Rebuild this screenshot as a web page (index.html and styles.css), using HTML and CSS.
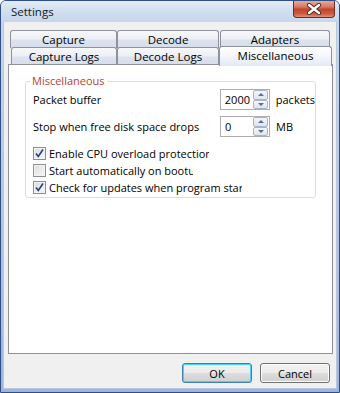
FILE: index.html
```html
<!DOCTYPE html>
<html>
<head>
<meta charset="utf-8">
<link rel="stylesheet" href="styles.css">
</head>
<body>
<div class="window">
  <div class="titlebar">
    <span class="title">Settings</span>
    <div class="close">
      <svg width="16" height="12" viewBox="0 0 16 12">
        <path d="M3 2 L13 10 M13 2 L3 10" stroke="#4a2a24" stroke-width="4.2" stroke-linecap="round"/>
        <path d="M3 2 L13 10 M13 2 L3 10" stroke="#ffffff" stroke-width="2.4" stroke-linecap="round"/>
      </svg>
    </div>
  </div>
  <div class="client">
    <div class="tabs">
      <div class="tabrow back">
        <div class="tab t1">Capture</div>
        <div class="tab t2">Decode</div>
        <div class="tab t3">Adapters</div>
      </div>
      <div class="tabrow front">
        <div class="tab t4">Capture Logs</div>
        <div class="tab t5">Decode Logs</div>
        <div class="tab sel">Miscellaneous</div>
      </div>
    </div>
    <div class="pane">
      <fieldset class="group">
        <legend>Miscellaneous</legend>
        <div class="row">
          <span class="label">Packet buffer</span>
          <div class="spin"><span class="val">2000</span><div class="arrows"><span class="up"></span><span class="down"></span></div></div>
          <span class="unit">packets</span>
        </div>
        <div class="row row2">
          <span class="label">Stop when free disk space drops</span>
          <div class="spin"><span class="val">0</span><div class="arrows"><span class="up"></span><span class="down"></span></div></div>
          <span class="unit">MB</span>
        </div>
        <div class="check first">
          <span class="box checked"><svg width="11" height="11" viewBox="0 0 11 11"><path d="M2 5.5 L4.3 8.5 L9 1.5" fill="none" stroke="#263f86" stroke-width="1.6"/></svg></span>
          <span class="ctext c1">Enable CPU overload protection</span>
        </div>
        <div class="check">
          <span class="box"></span>
          <span class="ctext c2">Start automatically on bootup</span>
        </div>
        <div class="check">
          <span class="box checked"><svg width="11" height="11" viewBox="0 0 11 11"><path d="M2 5.5 L4.3 8.5 L9 1.5" fill="none" stroke="#263f86" stroke-width="1.6"/></svg></span>
          <span class="ctext c3">Check for updates when program starts</span>
        </div>
      </fieldset>
    </div>
    <div class="buttons">
      <div class="btn default">OK</div>
      <div class="btn">Cancel</div>
    </div>
  </div>
</div>
</body>
</html>
```
FILE: styles.css
```css
* { box-sizing: border-box; }
html, body { margin: 0; padding: 0; }
body {
  width: 340px;
  height: 393px;
  overflow: hidden;
  font-family: "Open Sans", "Noto Sans", sans-serif;
  font-size: 11px;
  color: #000;
  background: #ffffff;
}
.window {
  width: 340px;
  height: 393px;
  border: 1px solid #2f4f86;
  border-radius: 6px 6px 0 0;
  background: linear-gradient(to bottom, #d9e4f3 0, #c8d7ed 22px, #9db5dd 100%);
  display: flex;
  flex-direction: column;
  overflow: hidden;
}
.titlebar {
  height: 21px;
  position: relative;
  display: flex;
  align-items: center;
  padding-left: 10px;
  background: linear-gradient(to bottom, #e3ebf6 0, #d1deef 50%, #c6d6ec 100%);
}
.title {
  font-size: 11.5px;
  color: #101a2a;
}
.close {
  position: absolute;
  right: 4px;
  top: -1px;
  width: 42px;
  height: 18px;
  border: 1px solid #6b2b22;
  border-top: none;
  border-radius: 0 0 4px 4px;
  background: linear-gradient(to bottom, #eab2a3 0, #d77a64 40%, #c2442c 55%, #cc5a3f 80%, #e09077 100%);
  display: flex;
  align-items: center;
  justify-content: center;
}
.client {
  flex: 1;
  margin: 0 2px 3px 2px;
  background: #f0f0f0;
  border: 1px solid #b9c8de;
  border-top: none;
  padding: 8px 3px 0 4px;
  display: flex;
  flex-direction: column;
}
.tabs { display: flex; flex-direction: column; }
.tabrow { display: flex; height: 17px; align-items: flex-start; }
.back { margin-left: 2px; }
.front { margin-left: 3px; }
.tab {
  height: 18px;
  border: 1px solid #8e929c;
  border-bottom: none;
  border-radius: 3px 3px 0 0;
  background: linear-gradient(to bottom, #f7f8fa 0, #eceff5 45%, #dde3ee 55%, #d6dce9 100%);
  display: flex;
  align-items: center;
  justify-content: center;
  line-height: 14px;
  padding-top: 1px;
  white-space: nowrap;
  font-size: 11.5px;
}
.t1 { width: 107px; }
.t2 { width: 102px; margin-left: 0; }
.t3 { width: 110px; margin-left: 1px; }
.t4 { width: 106px; }
.t5 { width: 102px; }
.sel {
  width: 113px;
  height: 20px;
  margin-top: -1px;
  position: relative;
  z-index: 2;
  padding-bottom: 3px;
  background: linear-gradient(to bottom, #ffffff 0, #f6f8fc 40%, #e3e9f6 100%);
}
.pane {
  height: 290px;
  border: 1px solid #8e929c;
  background: #ffffff;
  padding: 8px 16px 0 16px;
  position: relative;
  z-index: 1;
}
.group {
  margin: 0;
  padding: 0 0 1px 7px;
  border: 1px solid #d5dfe5;
  border-radius: 3px;
  min-width: 0;
}
.group legend {
  padding: 0 2px;
  margin-left: -3px;
  color: #b5452b;
  line-height: 16px;
}
.row {
  display: flex;
  align-items: center;
  height: 21px;
}
.row2 { margin-top: 6px; }
.label { width: 187px; white-space: nowrap; }
.spin {
  width: 50px;
  height: 21px;
  border: 1px solid #abadb3;
  background: #fff;
  display: flex;
  align-items: center;
  padding-left: 4px;
  padding-right: 1px;
}
.val { flex: 1; }
.arrows {
  width: 15px;
  height: 19px;
  display: flex;
  flex-direction: column;
}
.arrows span {
  flex: 1;
  border: 1px solid #a9b4c5;
  border-radius: 2px;
  background: linear-gradient(to bottom, #f5f6f8, #e0e3ea);
  position: relative;
}
.arrows span::after {
  content: "";
  position: absolute;
  left: 4px;
  top: 2px;
  border-left: 3px solid transparent;
  border-right: 3px solid transparent;
}
.arrows .up::after { border-bottom: 3px solid #4f6fa8; }
.arrows .down::after { border-top: 3px solid #4f6fa8; }
.unit { margin-left: 6px; }
.check {
  display: flex;
  align-items: center;
  height: 17px;
}
.check.first { margin-top: 8px; }
.box {
  width: 13px;
  height: 13px;
  border: 1px solid #8f8f8f;
  background: linear-gradient(135deg, #dcdcdc, #f8f8f8);
  box-shadow: inset 0 0 0 1px #f4f4f4;
  display: flex;
  align-items: center;
  justify-content: center;
  flex-shrink: 0;
}
.ctext {
  margin-left: 3px;
  white-space: nowrap;
  overflow: hidden;
}
.c1 { width: 160px; }
.c2 { width: 144px; }
.c3 { width: 193px; }
.buttons {
  display: flex;
  justify-content: flex-end;
  gap: 8px;
  margin-top: 9px;
  margin-right: 3px;
}
.btn {
  width: 70px;
  height: 20px;
  border: 1px solid #707070;
  border-radius: 3px;
  background: linear-gradient(to bottom, #f2f2f2 0, #ebebeb 48%, #dddddd 52%, #cfcfcf 100%);
  box-shadow: inset 0 0 0 1px #fcfcfc;
  display: flex;
  align-items: center;
  justify-content: center;
}
.btn.default {
  border-color: #3c7fb1;
  box-shadow: inset 0 0 0 1px #48d2f8;
}
```
